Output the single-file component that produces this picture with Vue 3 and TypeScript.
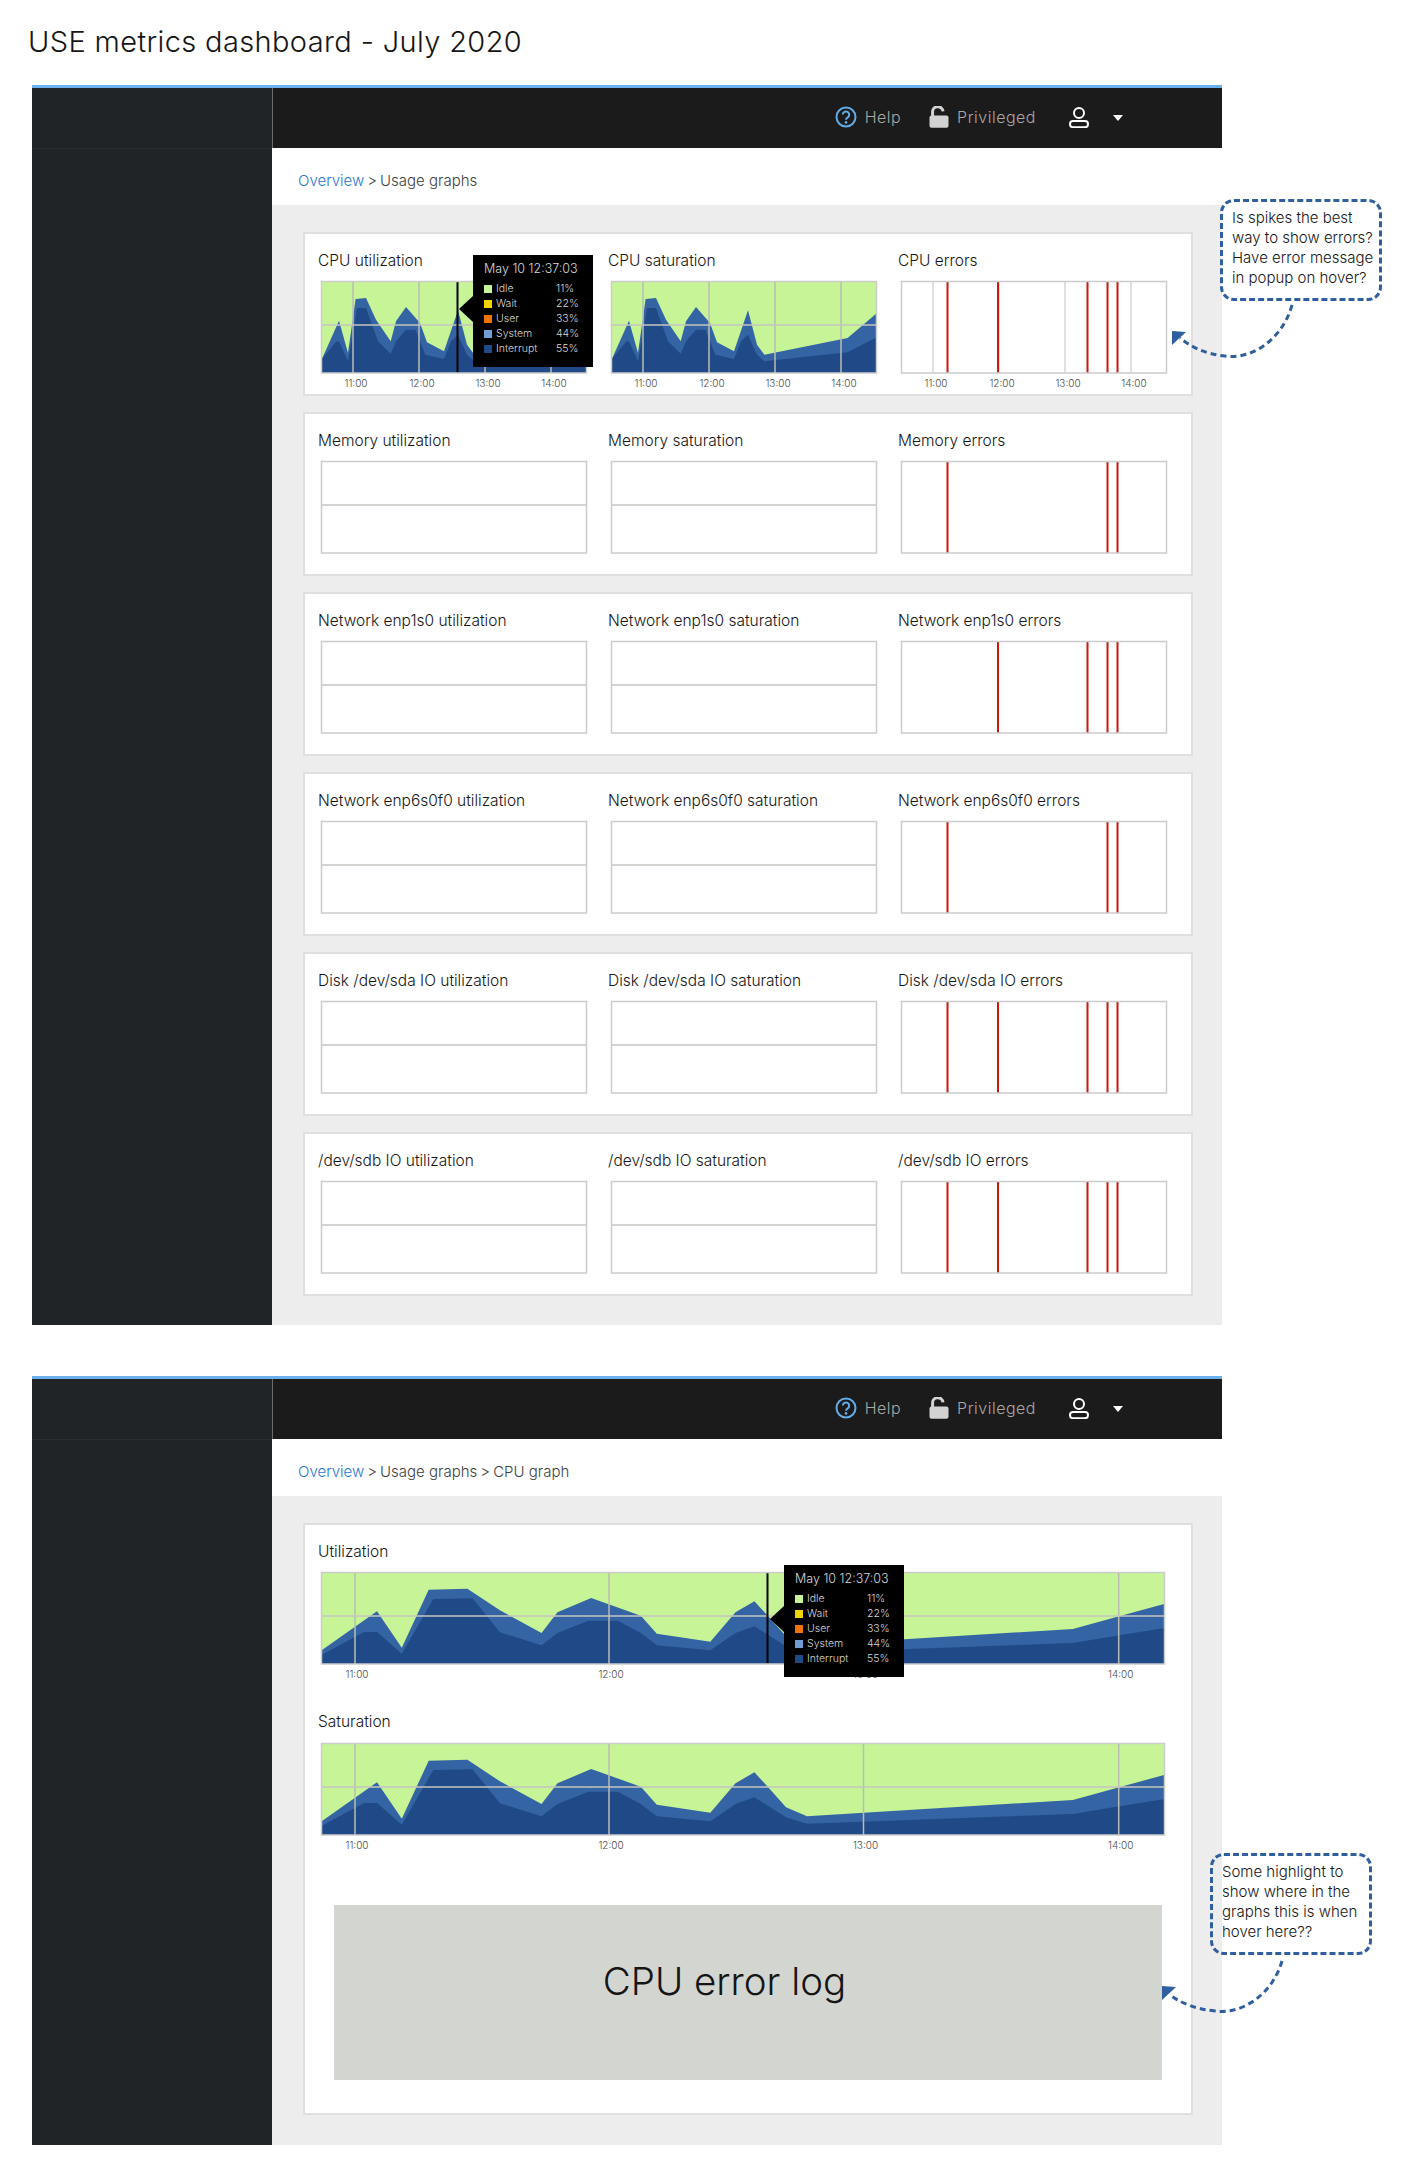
<template>
  <div class="page">
    <h1 class="page-title">USE metrics dashboard - July 2020</h1>

    <section v-for="screen in screens" :key="screen.id" class="frame" :class="`frame-${screen.id}`">
      <aside class="sidebar">
        <div class="sidebar-top"></div>
      </aside>
      <div class="main">
        <header class="topbar">
          <span class="topbar-item">
            <svg class="icon-help" width="22" height="22" viewBox="0 0 22 22">
              <circle cx="11" cy="11" r="9.5" fill="none" stroke="#62ade9" stroke-width="2" />
              <path d="M7.8 8.6a3.2 3.1 0 1 1 4.9 2.7c-1.2.7-1.7 1.3-1.7 2.5" fill="none" stroke="#62ade9" stroke-width="2" />
              <circle cx="11" cy="16.4" r="1.3" fill="#62ade9" />
            </svg>
            Help
          </span>
          <span class="topbar-item">
            <svg class="icon-lock" width="20" height="22" viewBox="0 0 20 22">
              <path d="M3.6 10V6.4a5.2 5.2 0 0 1 10.4-1" fill="none" stroke="#d2d2d2" stroke-width="3" />
              <rect x="0.5" y="9.5" width="19" height="12.2" rx="2" fill="#d2d2d2" />
            </svg>
            Privileged
          </span>
          <svg class="icon-user" width="20" height="22" viewBox="0 0 20 22">
            <circle cx="10" cy="7" r="5" fill="none" stroke="#fff" stroke-width="2" />
            <rect x="1" y="15" width="18" height="6.2" rx="3" fill="none" stroke="#fff" stroke-width="2" />
          </svg>
          <span class="caret"></span>
        </header>

        <nav class="breadcrumb">
          <a class="crumb-link">Overview</a>
          <template v-for="crumb in screen.crumbs" :key="crumb"><span class="crumb-sep">&gt;</span>{{ crumb }}</template>
        </nav>

        <div class="content">
          <div v-for="(card, i) in screen.cards" :key="i" class="card" :class="{ 'card-wide': card.wide }">
            <div class="graphs">
              <div v-for="graph in card.graphs" :key="graph.title" class="graph">
                <div class="graph-title">{{ graph.title }}</div>
                <svg class="plot" :width="graph.width" height="112" :viewBox="`0 0 ${graph.width} 112`">
                  <rect :width="graph.width" height="92" :fill="graph.areas ? '#c6f497' : '#fff'" />
                  <template v-if="graph.areas">
                    <polygon :points="areaPoints(graph.areas[0], graph.width)" fill="#3464a4" />
                    <polygon :points="areaPoints(graph.areas[1], graph.width)" fill="#204a87" />
                  </template>
                  <line v-for="x in graph.grid" :key="x" :x1="x" :x2="x" y1="0" y2="92" :stroke="graph.areas ? '#b9bdb5' : '#d6d6d6'" stroke-width="1.5" />
                  <line v-if="graph.mid" x1="0" :x2="graph.width" y1="44" y2="44" stroke="#c4c6c0" stroke-width="1.5" />
                  <line v-for="x in graph.errors" :key="x" :x1="x" :x2="x" y1="0" y2="92" stroke="#c9190b" stroke-width="2" />
                  <line v-if="graph.tooltip" :x1="graph.tooltip.cursor" :x2="graph.tooltip.cursor" y1="1" y2="92" stroke="#000" stroke-width="2" />
                  <rect x="0.5" y="0.5" :width="graph.width - 1" height="91.5" fill="none" stroke="#cccccc" stroke-width="1.5" />
                  <text v-for="tick in graph.ticks" :key="tick.label" class="tick" :x="tick.x" y="106" text-anchor="middle">{{ tick.label }}</text>
                </svg>

                <div v-if="graph.tooltip" class="tooltip" :style="{ left: graph.tooltip.left + 'px', top: graph.tooltip.top + 'px' }">
                  <div class="tooltip-time">May 10 12:37:03</div>
                  <div v-for="row in legend" :key="row.label" class="tooltip-row">
                    <span class="swatch" :style="{ background: row.color }"></span>
                    <span class="tooltip-label">{{ row.label }}</span>
                    <span>{{ row.value }}</span>
                  </div>
                </div>
              </div>
            </div>
            <div v-if="card.wide" class="error-log">CPU error log</div>
          </div>
        </div>
      </div>
    </section>

    <div class="note note-spikes">Is spikes the best way to show errors? Have error message in popup on hover?</div>
    <svg class="note-arrow arrow-spikes" width="135" height="65" viewBox="0 0 135 65">
      <path d="M127 5C118 38 88 60 60 56C40 54 26 47 15 38" fill="none" stroke="#2f5f9f" stroke-width="3" stroke-dasharray="6 4" />
      <polygon points="7,31 21,32 7,45" fill="#2f5f9f" />
    </svg>

    <div class="note note-highlight">Some highlight to show where in the graphs this is when hover here??</div>
    <svg class="note-arrow arrow-highlight" width="135" height="65" viewBox="0 0 135 65">
      <path d="M127 6C118 38 88 60 60 56C40 54 26 48 15 40" fill="none" stroke="#2f5f9f" stroke-width="3" stroke-dasharray="6 4" />
      <polygon points="7,31 21,32 7,45" fill="#2f5f9f" />
    </svg>
  </div>
</template>

<script setup lang="ts">
type Point = [number, number]

interface Tick {
  x: number
  label: string
}

interface Graph {
  title: string
  width: number
  areas?: Point[][]
  grid?: number[]
  mid?: boolean
  errors?: number[]
  ticks?: Tick[]
  tooltip?: { left: number; top: number; cursor: number }
}

interface Card {
  wide?: boolean
  graphs: Graph[]
}

const SMALL = 266
const WIDE = 844

const smallGrid = [32, 98, 164, 230]
const wideGrid = [34, 288, 542.5, 797.7]
const hours = ['11:00', '12:00', '13:00', '14:00']

const smallTicks = hours.map((label, i) => ({ x: smallGrid[i] + 3, label }))
const wideTicks = hours.map((label, i) => ({ x: wideGrid[i] + 2, label }))

const smallAreas: Point[][] = [
  [[0, 80], [18, 39.7], [27, 72], [34.6, 18], [45, 17], [55, 38.7], [69.7, 60.3], [75, 40.3], [85, 26], [99, 42], [106, 61.3], [123, 70.3], [137, 29.3], [146, 63.7], [153.4, 73.7], [236.6, 57], [266, 32]],
  [[0, 79], [15.5, 60.3], [18, 60.3], [27, 80.3], [36, 27], [45, 27], [57, 60.3], [69.7, 72.7], [75, 60.3], [85, 48.7], [94.5, 48.7], [104.3, 73.7], [123, 78], [130, 60.3], [137, 53.7], [146, 73.7], [153.4, 80.3], [236.6, 71.3], [266, 56]],
]

const wideAreas: Point[][] = [
  [[0, 78.7], [56, 39.3], [80.8, 75.7], [107.7, 17.7], [146.4, 16.7], [178.9, 38.3], [220.5, 61], [236.5, 40.3], [270.2, 26], [319.8, 43.7], [335.8, 61.7], [389.3, 69.7], [414.5, 40.3], [433.4, 29.3], [450.3, 47.7], [465, 64.3], [486, 73.3], [751.9, 57], [798.2, 44.3], [844, 31.7]],
  [[0, 83.3], [43, 60], [56, 60], [80.8, 81.7], [112.3, 27], [151.5, 26.3], [178.9, 60.3], [220.5, 73.3], [236.5, 61], [267.3, 48.7], [296.8, 48.7], [319.8, 61], [335.8, 73.3], [389.3, 78.3], [414.5, 61], [433.4, 54.3], [465, 74.3], [486, 80.7], [751.9, 71], [798.2, 63.3], [844, 56]],
]

const legend = [
  { label: 'Idle', value: '11%', color: '#c6f497' },
  { label: 'Wait', value: '22%', color: '#f0d400' },
  { label: 'User', value: '33%', color: '#f27300' },
  { label: 'System', value: '44%', color: '#6f9fd2' },
  { label: 'Interrupt', value: '55%', color: '#204a87' },
]

// x positions of the red error spikes
const SPIKES = { a: 46.5, b: 97, c: 186.5, d: 206.5, e: 216.5 }

function emptyRow(prefix: string, spikes: number[]): Card {
  return {
    graphs: [
      { title: `${prefix} utilization`, width: SMALL, mid: true },
      { title: `${prefix} saturation`, width: SMALL, mid: true },
      { title: `${prefix} errors`, width: SMALL, errors: spikes },
    ],
  }
}

function areaPoints(area: Point[], width: number) {
  const line = area.map(([x, y]) => `${x},${y}`).join(' ')
  return `0,92 ${line} ${width},92`
}

const { a, b, c, d, e } = SPIKES

const screens: { id: string; crumbs: string[]; cards: Card[] }[] = [
  {
    id: 'overview',
    crumbs: ['Usage graphs'],
    cards: [
      {
        graphs: [
          { title: 'CPU utilization', width: SMALL, areas: smallAreas, grid: smallGrid, mid: true, ticks: smallTicks, tooltip: { left: 154, top: 4, cursor: 136.5 } },
          { title: 'CPU saturation', width: SMALL, areas: smallAreas, grid: smallGrid, mid: true, ticks: smallTicks },
          { title: 'CPU errors', width: SMALL, grid: smallGrid, errors: [a, b, c, d, e], ticks: smallTicks },
        ],
      },
      emptyRow('Memory', [a, d, e]),
      emptyRow('Network enp1s0', [b, c, d, e]),
      emptyRow('Network enp6s0f0', [a, d, e]),
      emptyRow('Disk /dev/sda IO', [a, b, c, d, e]),
      emptyRow('/dev/sdb IO', [a, b, c, d, e]),
    ],
  },
  {
    id: 'detail',
    crumbs: ['Usage graphs', 'CPU graph'],
    cards: [
      {
        wide: true,
        graphs: [
          { title: 'Utilization', width: WIDE, areas: wideAreas, grid: wideGrid, mid: true, ticks: wideTicks, tooltip: { left: 465, top: 23, cursor: 446.5 } },
          { title: 'Saturation', width: WIDE, areas: wideAreas, grid: wideGrid, mid: true, ticks: wideTicks },
        ],
      },
    ],
  },
]
</script>

<style>
body {
  background: #fff;
}
</style>

<style scoped>
.page {
  position: relative;
  width: 1412px;
  height: 2175px;
  font-family: Inter, "Liberation Sans", sans-serif;
  color: #151515;
  overflow: hidden;
}

.page-title {
  margin: 0;
  padding: 24px 0 0 28px;
  height: 85px;
  box-sizing: border-box;
  font-size: 29px;
  letter-spacing: 0.37px;
  line-height: 36px;
  font-weight: 300;
}

.frame {
  display: flex;
  margin-left: 32px;
  width: 1190px;
  border-top: 3px solid #6cb1ef;
  box-sizing: border-box;
}

.frame-overview {
  height: 1240px;
}

.frame-detail {
  height: 769px;
  margin-top: 51px;
}

.sidebar {
  width: 240px;
  flex-shrink: 0;
  background: #212427;
}

.sidebar-top {
  height: 60px;
  border-bottom: 1px solid #2c3033;
}

.main {
  flex: 1;
  display: flex;
  flex-direction: column;
  min-width: 0;
}

.topbar {
  display: flex;
  align-items: center;
  justify-content: flex-end;
  height: 60px;
  flex-shrink: 0;
  box-sizing: border-box;
  padding: 0 104px 3px 0;
  background: #1b1b1b;
  border-left: 1px solid #6a6d70;
  color: #a8a8a8;
  font-size: 16px;
  letter-spacing: 0.5px;
  font-weight: 300;
}

.topbar-item {
  display: flex;
  align-items: center;
  gap: 8px;
  margin-right: 28px;
}

.topbar-item + .topbar-item {
  margin-right: 33px;
}

.icon-user {
  margin-right: 24px;
}

.caret {
  width: 0;
  height: 0;
  margin: 3px -5px 0 0;
  border-left: 5px solid transparent;
  border-right: 5px solid transparent;
  border-top: 6px solid #fff;
}

.breadcrumb {
  height: 57px;
  flex-shrink: 0;
  padding: 23px 0 0 26px;
  box-sizing: border-box;
  font-size: 15px;
  line-height: 20px;
  font-weight: 300;
  color: #3c3f42;
}

.crumb-link {
  color: #1f78d1;
}

.crumb-sep {
  margin: 0 3px;
}

.content {
  flex: 1;
  display: flex;
  flex-direction: column;
  gap: 16px;
  padding: 27px 29px 0 31px;
  background: #ededed;
}

.card {
  background: #fff;
  border: 2px solid #dfdfdf;
  padding: 17px 0 1px 14px;
}

.graphs {
  display: grid;
  grid-template-columns: repeat(3, 267px);
  column-gap: 23px;
}

.card-wide .graphs {
  grid-template-columns: 1fr;
  row-gap: 28px;
}

.card-wide .graph + .graph .graph-title {
  margin-bottom: 11px;
}

.graph {
  position: relative;
}

.graph-title {
  margin: 0 0 10px -1px;
  font-size: 15.5px;
  line-height: 20px;
  font-weight: 300;
}

.plot {
  display: block;
  margin-left: 2px;
  overflow: visible;
}

.tick {
  font-size: 10px;
  font-weight: 300;
  fill: #4a4a4a;
}

.tooltip {
  position: absolute;
  width: 120px;
  height: 112px;
  box-sizing: border-box;
  padding: 6px 0 0 11px;
  background: #000;
  color: #d8d8d8;
  font-size: 10.5px;
  font-weight: 300;
}

.tooltip::before {
  content: "";
  position: absolute;
  left: -14px;
  top: 41px;
  border-top: 13px solid transparent;
  border-bottom: 13px solid transparent;
  border-right: 14px solid #000;
}

.tooltip-time {
  font-size: 12.5px;
  line-height: 16px;
  margin-bottom: 4px;
}

.tooltip-row {
  display: flex;
  align-items: center;
  height: 15px;
}

.swatch {
  width: 8px;
  height: 8px;
  margin-right: 4px;
}

.tooltip-label {
  width: 60px;
}

.error-log {
  display: flex;
  align-items: center;
  justify-content: center;
  height: 175px;
  width: 828px;
  margin: 50px 0 32px 15px;
  padding: 0 47px 24px 0;
  box-sizing: border-box;
  background: #d3d6d0;
  font-size: 38.5px;
  font-weight: 300;
}

.note {
  position: absolute;
  width: 162px;
  height: 102px;
  box-sizing: border-box;
  padding: 6px 2px 0 9px;
  border: 3px dashed #2f5f9f;
  border-radius: 14px;
  font-size: 15px;
  line-height: 20px;
  font-weight: 300;
}

.note-spikes {
  left: 1220px;
  top: 199px;
}

.note-highlight {
  left: 1210px;
  top: 1853px;
}

.note-arrow {
  position: absolute;
}

.arrow-spikes {
  left: 1165px;
  top: 300px;
}

.arrow-highlight {
  left: 1155px;
  top: 1955px;
}
</style>
